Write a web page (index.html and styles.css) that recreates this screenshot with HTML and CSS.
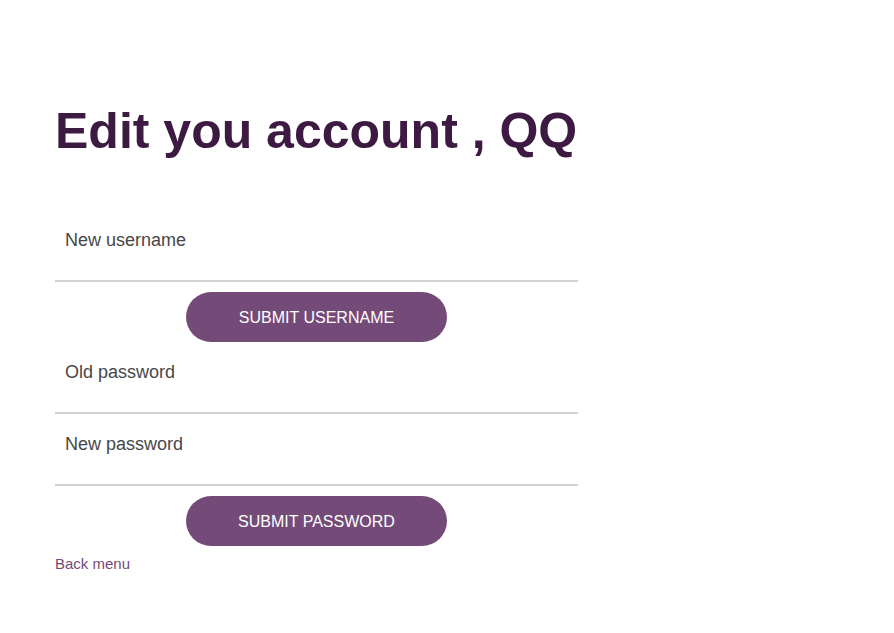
FILE: index.html
```html
<!DOCTYPE html>
<html lang="en">
<head>
<meta charset="utf-8">
<title>Edit account</title>
<link rel="stylesheet" href="styles.css">
</head>
<body>
<main class="page">
  <h1 class="title">Edit you account , QQ</h1>
  <form class="form">
    <input class="field" type="text" placeholder="New username">
    <button class="btn" type="button">Submit username</button>
  </form>
  <form class="form">
    <input class="field" type="password" placeholder="Old password">
    <input class="field" type="password" placeholder="New password">
    <button class="btn" type="button">Submit password</button>
  </form>
  <a class="back" href="#">Back menu</a>
</main>
</body>
</html>
```
FILE: styles.css
```css
html, body {
  margin: 0;
  padding: 0;
  background: #ffffff;
}
body {
  font-family: "Liberation Sans", Arial, sans-serif;
}
.page {
  width: 523px;
  padding: 103px 0 0 55px;
  display: flex;
  flex-direction: column;
}
.title {
  margin: 0 0 51px 0;
  font-size: 50px;
  line-height: 56px;
  font-weight: bold;
  white-space: nowrap;
  color: #3d1a41;
}
.form {
  display: flex;
  flex-direction: column;
  align-items: center;
  margin: 0;
}
.field {
  align-self: stretch;
  box-sizing: border-box;
  height: 72px;
  margin: 0;
  padding: 0 10px 10px 10px;
  border: none;
  border-bottom: 2px solid #d3d3d3;
  font-family: "Liberation Sans", Arial, sans-serif;
  font-size: 18px;
  color: #444444;
  background: transparent;
  outline: none;
}
.field::placeholder {
  color: #474747;
  opacity: 1;
}
.btn {
  margin-top: 10px;
  width: 261px;
  height: 50px;
  padding: 2px 0 0 0;
  border: none;
  border-radius: 25px;
  background: #744a78;
  color: #ffffff;
  font-family: "Liberation Sans", Arial, sans-serif;
  font-size: 16px;
  text-transform: uppercase;
  cursor: pointer;
}
.back {
  align-self: flex-start;
  margin-top: 9px;
  font-size: 15px;
  line-height: 17px;
  color: #744a78;
  text-decoration: none;
}
```
